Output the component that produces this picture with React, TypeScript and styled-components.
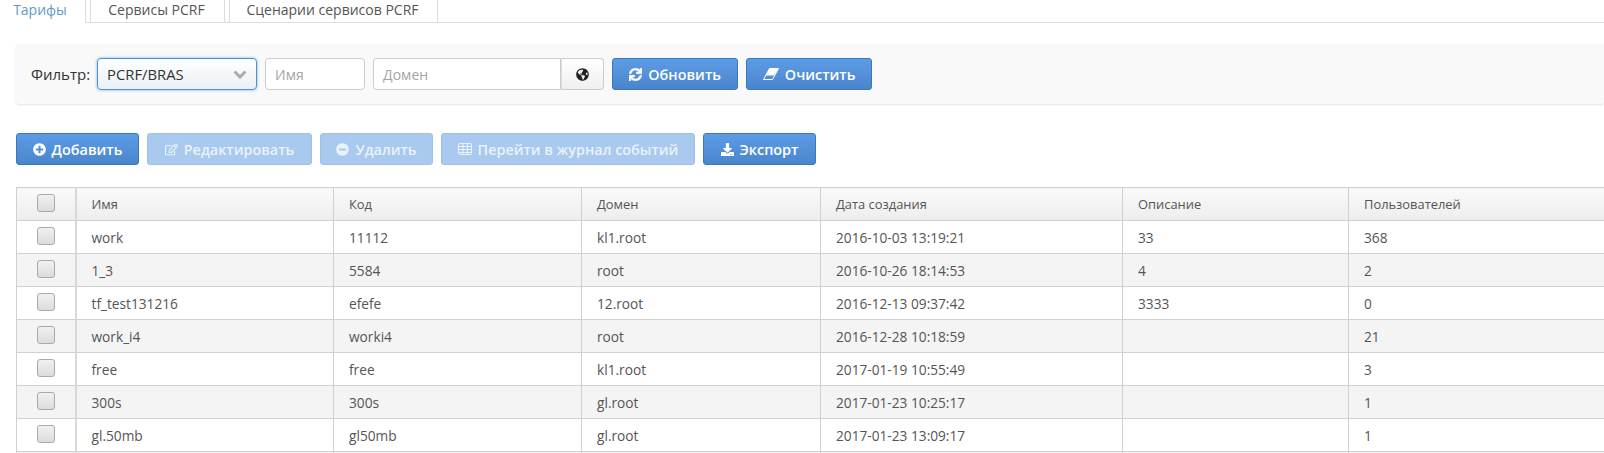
import React from "react";
import styled, { createGlobalStyle, css } from "styled-components";
import { FaPlusCircle, FaRegEdit, FaMinusCircle, FaDownload, FaSync, FaGlobeAmericas } from "react-icons/fa";

const Global = createGlobalStyle`
  html, body { margin: 0; padding: 0; background: #fff; overflow: hidden; }
  body { font-family: "Open Sans", "Noto Sans", sans-serif; font-size: 13.7px; color: #555; width: 1604px; height: 453px; }
`;

const Page = styled.div`
  display: flex;
  flex-direction: column;
  width: 1604px;
  height: 453px;
  overflow: hidden;
`;

const Tabs = styled.div`
  display: flex;
  gap: 4px;
  height: 23px;
  box-sizing: border-box;
  border-bottom: 1px solid #ddd;
  flex: none;
`;

const Tab = styled.div<{ $active?: boolean; $w: number }>`
  width: ${(p) => p.$w}px;
  height: 23px;
  box-sizing: border-box;
  line-height: 20px;
  text-align: center;
  font-size: 14px;
  white-space: nowrap;
  color: ${(p) => (p.$active ? "#5f9bcb" : "#555")};
  ${(p) =>
    p.$active
      ? css`
          border-right: 1px solid #ddd;
          padding-right: 5px;
          background: #fff;
        `
      : css`
          border-left: 1px solid #ddd;
          border-right: 1px solid #ddd;
          border-bottom: 1px solid #ddd;
          padding-right: 2px;
        `}
`;

const FilterBar = styled.div`
  display: flex;
  align-items: center;
  margin: 21px 0 0 16px;
  width: 1588px;
  height: 60px;
  box-sizing: border-box;
  padding: 0 15px;
  background: #f9f9f9;
  box-shadow: 0 1px 2px rgba(0, 0, 0, 0.12);
  border-radius: 3px;
  flex: none;
`;

const FilterLabel = styled.span`
  font-size: 15px;
  color: #333;
  margin-right: 7px;
`;

const SelectBox = styled.div`
  width: 160px;
  height: 32px;
  box-sizing: border-box;
  display: flex;
  align-items: center;
  justify-content: space-between;
  padding: 0 9px;
  margin-right: 8px;
  border: 1px solid #4a90d9;
  border-radius: 4px;
  background: linear-gradient(#fff, #e9f0f7);
  box-shadow: 0 0 3px rgba(74, 144, 217, 0.7);
  color: #333;
  font-size: 14.8px;
`;

const Chevron = styled.svg`
  width: 14px;
  height: 10px;
  color: #aaa;
`;

const TextField = styled.div<{ $w: number; $joined?: boolean }>`
  width: ${(p) => p.$w}px;
  height: 32px;
  box-sizing: border-box;
  display: flex;
  align-items: center;
  padding: 0 9px;
  background: #fff;
  border: 1px solid #ccc;
  border-radius: ${(p) => (p.$joined ? "4px 0 0 4px" : "4px")};
  margin-right: ${(p) => (p.$joined ? 0 : 8)}px;
  color: #a5a5a5;
  font-size: 14px;
`;

const Addon = styled.div`
  width: 43px;
  height: 32px;
  box-sizing: border-box;
  display: flex;
  align-items: center;
  justify-content: center;
  border: 1px solid #ccc;
  border-left-color: #ddd;
  border-radius: 0 4px 4px 0;
  background: linear-gradient(#fff, #efefef);
  margin-right: 8px;
  color: #222;
  font-size: 13px;
`;

const Button = styled.div<{ $w: number; $disabled?: boolean }>`
  width: ${(p) => p.$w}px;
  height: 32px;
  box-sizing: border-box;
  display: flex;
  align-items: center;
  justify-content: center;
  gap: 6px;
  border: 1px solid #3b78b8;
  border-radius: 3px;
  color: #fff;
  font-size: 14.4px;
  font-weight: 600;
  background: linear-gradient(#5c9ce6, #4a85cc);
  svg { flex: none; }
  ${(p) =>
    p.$disabled &&
    css`
      background: #a9c9ee;
      border-color: #a0c0e2;
      color: #eaf2fb;
    `}
`;

const ButtonGap = styled.div`
  width: 8px;
  flex: none;
`;

const Toolbar = styled.div`
  display: flex;
  gap: 8px;
  margin: 29px 0 0 16px;
  flex: none;
`;

const Table = styled.table`
  margin: 22px 0 0 16px;
  border-collapse: collapse;
  table-layout: fixed;
  width: 1707px;
  flex: none;
  font-size: 13.7px;
`;

const HeadCell = styled.th`
  height: 33px;
  box-sizing: border-box;
  padding: 0 0 0 15px;
  text-align: left;
  font-weight: 400;
  font-size: 12.9px;
  color: #555;
  background: linear-gradient(#fafafa, #ededed);
  border: 1px solid #d0d0d0;
`;

const Row = styled.tr<{ $odd: boolean }>`
  background: ${(p) => (p.$odd ? "#f4f4f4" : "#fff")};
`;

const Cell = styled.td`
  height: 33px;
  box-sizing: border-box;
  padding: 0 0 0 15px;
  color: #555;
  border: 1px solid #d0d0d0;
  white-space: nowrap;
`;

const CheckCell = styled(Cell)`
  padding: 0;
  text-align: center;
  border-right: 2px solid #d8d8d8;
`;

const CheckHead = styled(HeadCell)`
  padding: 0;
  text-align: center;
  border-right: 2px solid #d8d8d8;
`;

const Check = styled.span`
  display: inline-block;
  vertical-align: middle;
  width: 16px;
  height: 16px;
  margin-top: -5px;
  border: 1px solid #aaa;
  border-radius: 3px;
  background: linear-gradient(#f0f0f0, #dcdcdc);
`;

const EraserIcon = () => (
  <svg width="16" height="12" viewBox="0 0 16 12" aria-hidden="true">
    <path d="M6.5 0.5 H15.5 L9.5 11.5 H0.5 Z" fill="none" stroke="currentColor" strokeWidth="1" />
    <path d="M6.5 0.5 H15.5 L11 7.5 H2.5 Z" fill="currentColor" />
  </svg>
);

const GridIcon = () => (
  <svg width="14" height="12" viewBox="0 0 14 12" aria-hidden="true" fill="none" stroke="currentColor" strokeWidth="1">
    <rect x="0.5" y="0.5" width="13" height="11" rx="1" />
    <path d="M0.5 3.5H13.5M0.5 6.5H13.5M0.5 9.5H13.5M5 0.5V11.5M9.5 0.5V11.5" />
  </svg>
);

const widths = [59, 258, 248, 239, 302, 226, 375];
const heads = ["Имя", "Код", "Домен", "Дата создания", "Описание", "Пользователей"];
const rows = [
  ["work", "11112", "kl1.root", "2016-10-03 13:19:21", "33", "368"],
  ["1_3", "5584", "root", "2016-10-26 18:14:53", "4", "2"],
  ["tf_test131216", "efefe", "12.root", "2016-12-13 09:37:42", "3333", "0"],
  ["work_i4", "worki4", "root", "2016-12-28 10:18:59", "", "21"],
  ["free", "free", "kl1.root", "2017-01-19 10:55:49", "", "3"],
  ["300s", "300s", "gl.root", "2017-01-23 10:25:17", "", "1"],
  ["gl.50mb", "gl50mb", "gl.root", "2017-01-23 13:09:17", "", "1"],
  ["", "", "", "", "", ""],
];

export default function App() {
  return (
    <Page>
      <Global />
      <Tabs>
        <Tab $active $w={86}>Тарифы</Tab>
        <Tab $w={135}>Сервисы PCRF</Tab>
        <Tab $w={209}>Сценарии сервисов PCRF</Tab>
      </Tabs>
      <FilterBar>
        <FilterLabel>Фильтр:</FilterLabel>
        <SelectBox>
          PCRF/BRAS
          <Chevron viewBox="0 0 14 10" aria-hidden="true">
            <path d="M1.5 2.5 L7 8 L12.5 2.5" fill="none" stroke="currentColor" strokeWidth="3" />
          </Chevron>
        </SelectBox>
        <TextField $w={100}>Имя</TextField>
        <TextField $w={188} $joined>Домен</TextField>
        <Addon><FaGlobeAmericas /></Addon>
        <Button $w={126}><FaSync size={13} stroke="currentColor" strokeWidth={20} />Обновить</Button>
        <ButtonGap />
        <Button $w={126}><EraserIcon />Очистить</Button>
      </FilterBar>
      <Toolbar>
        <Button $w={123}><FaPlusCircle size={13} />Добавить</Button>
        <Button $w={165} $disabled><FaRegEdit size={13} />Редактировать</Button>
        <Button $w={113} $disabled><FaMinusCircle size={13} />Удалить</Button>
        <Button $w={254} $disabled><GridIcon />Перейти в журнал событий</Button>
        <Button $w={113}><FaDownload size={13} />Экспорт</Button>
      </Toolbar>
      <Table>
        <colgroup>
          {widths.map((w, i) => <col key={i} width={w} />)}
        </colgroup>
        <thead>
          <tr>
            <CheckHead><Check /></CheckHead>
            {heads.map((h) => <HeadCell key={h}>{h}</HeadCell>)}
          </tr>
        </thead>
        <tbody>
          {rows.map((r, i) => (
            <Row key={i} $odd={i % 2 === 1}>
              <CheckCell><Check /></CheckCell>
              {r.map((c, j) => <Cell key={j}>{c}</Cell>)}
            </Row>
          ))}
        </tbody>
      </Table>
    </Page>
  );
}
